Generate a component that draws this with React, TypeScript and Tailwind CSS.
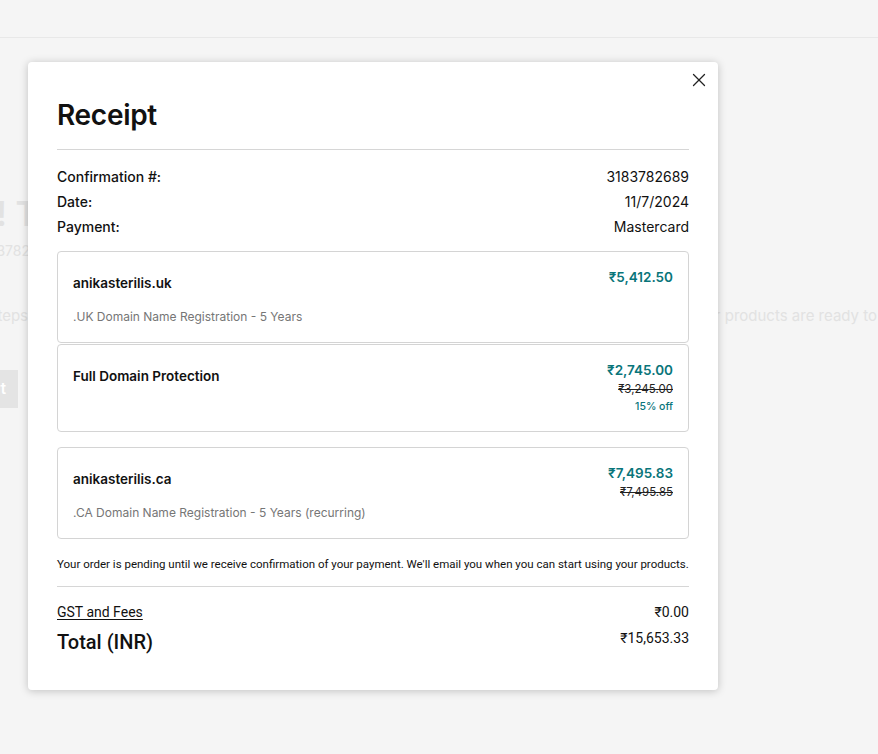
import { X } from "lucide-react";

const sans = "font-['Inter','Noto_Sans',sans-serif]";
const rob = "font-['Roboto','Noto_Sans',sans-serif]";

interface Item {
  name: string;
  desc?: string;
  price: string;
  was?: string;
  off?: string;
}

function ItemCard({ item, className = "" }: { item: Item; className?: string }) {
  return (
    <div className={`flex justify-between rounded-[4px] border border-[#d4d4d4] px-[15px] pt-[15px] pb-[15px] ${className}`}>
      <div className="flex flex-col">
        <div className="mt-[6px] text-[13.5px] font-semibold leading-[20px] text-[#111]">{item.name}</div>
        {item.desc && <div className="mt-[14px] text-[12px] leading-[20px] text-[#767676]">{item.desc}</div>}
      </div>
      <div className="flex flex-col items-end">
        <div className="text-[13.5px] font-semibold leading-[20px] text-[#09757a]">{item.price}</div>
        {item.was && <div className="text-[11.5px] leading-[18px] text-[#222] line-through">{item.was}</div>}
        {item.off && <div className="text-[10.5px] font-medium leading-[18px] text-[#09757a]">{item.off}</div>}
      </div>
    </div>
  );
}

export default function App() {
  return (
    <div className={`relative h-[754px] w-[878px] overflow-hidden bg-[#f5f5f5] ${sans}`}>
      {/* page behind the dialog */}
      <div className="h-[38px] border-b border-[#e8e8e8]" />
      <div className="flex flex-col whitespace-nowrap text-[#e2e2e2]">
        <div className="mt-[156px] flex w-[38px] shrink-0 justify-end text-[34px] font-semibold leading-[40px]">Thank you! T</div>
        <div className="mt-[7px] flex w-[30px] shrink-0 justify-end text-[14px] leading-[20px]">Confirmation #: 3183782</div>
        <div className="mt-[43px] flex text-[15px] leading-[24px]">
          <div className="flex w-[28px] shrink-0 justify-end">Next steps</div>
          <div className="w-[678px] shrink-0" />
          <div className="shrink-0">ur products are ready to use.</div>
        </div>
        <div className="-ml-[100px] mt-[42px] flex h-[38px] w-[118px] items-center justify-end bg-[#e4e4e4] pr-[12px] text-[15px] font-semibold text-white">Get Start</div>
      </div>

      {/* dialog */}
      <div className="absolute left-[28px] top-[62px] w-[690px] rounded-[4px] bg-white px-[29px] pt-[35px] pb-[34px] shadow-[0_1px_8px_rgba(0,0,0,0.22)]">
        <button className="absolute right-[8px] top-[7px] text-[#222]">
          <X size={22} strokeWidth={1.4} />
        </button>
        <h1 className="text-[28px] font-semibold leading-[36px] tracking-[-0.3px] text-[#111]">Receipt</h1>
        <div className="mt-[16px] border-t border-[#d6d6d6]" />
        <div className="mt-[14px] flex flex-col text-[14px] leading-[25px] text-[#111]">
          <div className="flex justify-between">
            <span className="font-medium">Confirmation #:</span>
            <span>3183782689</span>
          </div>
          <div className="flex justify-between">
            <span className="font-medium">Date:</span>
            <span>11/7/2024</span>
          </div>
          <div className="flex justify-between">
            <span className="font-medium">Payment:</span>
            <span>Mastercard</span>
          </div>
        </div>

        <div className="mt-[12px] flex flex-col">
          <ItemCard item={{ name: "anikasterilis.uk", desc: ".UK Domain Name Registration - 5 Years", price: "₹5,412.50" }} />
          <ItemCard
            className="mt-px"
            item={{ name: "Full Domain Protection", price: "₹2,745.00", was: "₹3,245.00", off: "15% off" }}
          />
          <ItemCard
            className="mt-[15px]"
            item={{
              name: "anikasterilis.ca",
              desc: ".CA Domain Name Registration - 5 Years (recurring)",
              price: "₹7,495.83",
              was: "₹7,495.85",
            }}
          />
        </div>

        <p className={`mt-[17px] text-[11.5px] leading-[16px] text-[#111] ${rob}`}>
          Your order is pending until we receive confirmation of your payment. We'll email you when you can start using your products.
        </p>
        <div className="mt-[14px] border-t border-[#d6d6d6]" />
        <div className={`mt-[15px] flex justify-between text-[14px] leading-[20px] text-[#111] ${rob}`}>
          <span className="underline underline-offset-2">GST and Fees</span>
          <span>₹0.00</span>
        </div>
        <div className={`mt-[6px] flex items-start justify-between text-[#111] ${rob}`}>
          <span className="text-[20px] font-medium leading-[28px]">Total (INR)</span>
          <span className="text-[14px] leading-[20px]">₹15,653.33</span>
        </div>
      </div>
    </div>
  );
}
